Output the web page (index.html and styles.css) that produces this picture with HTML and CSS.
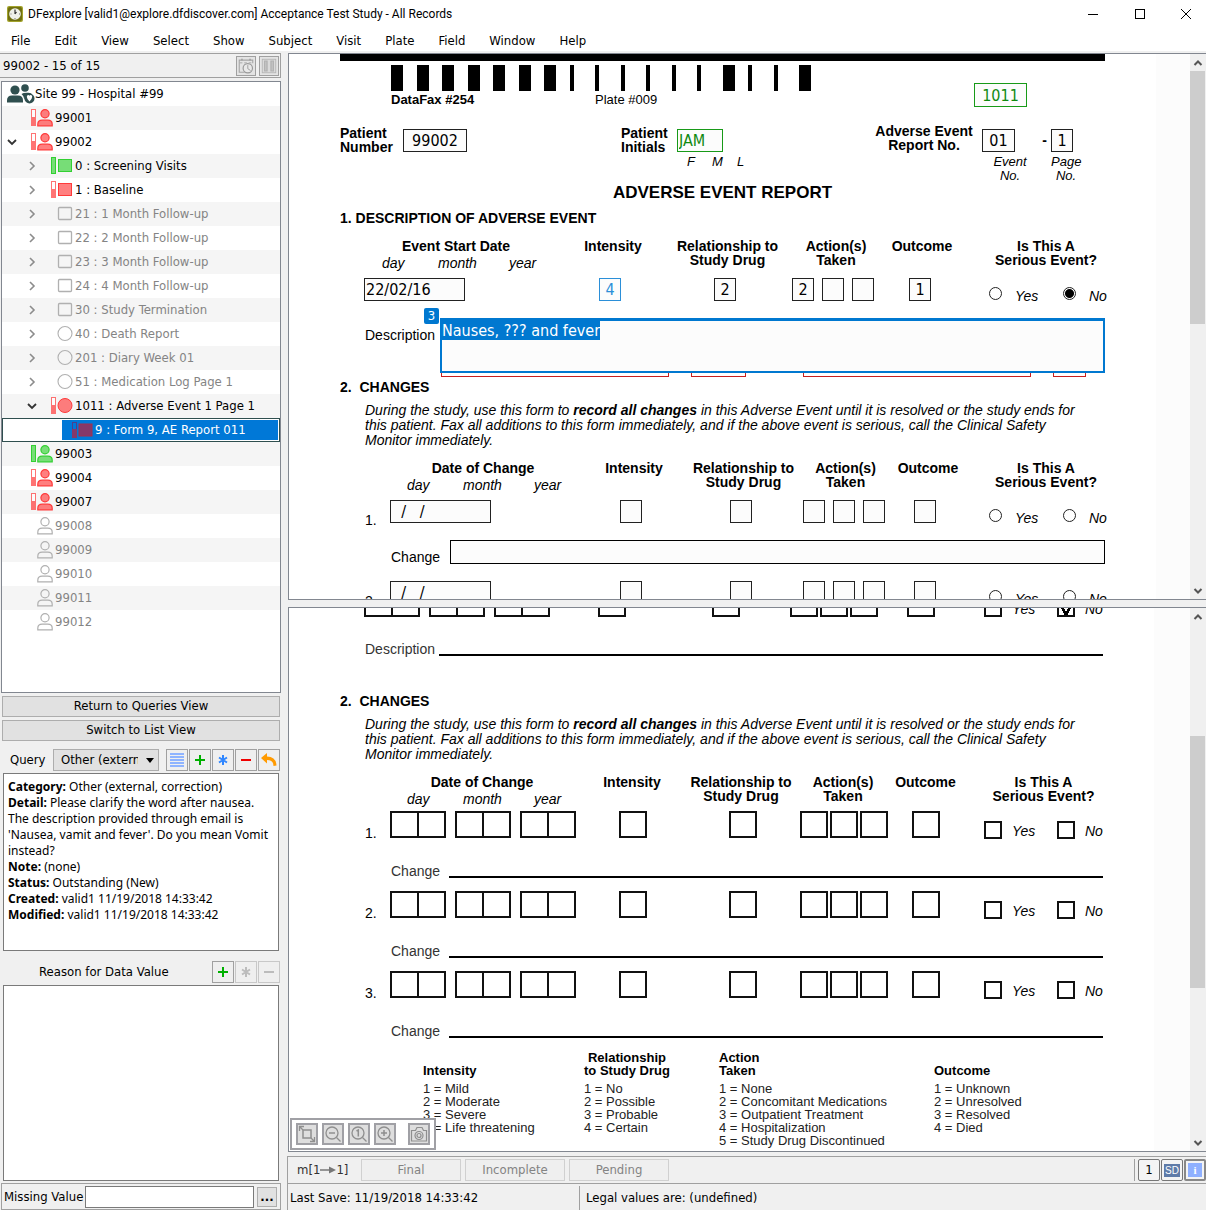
FILE: index.html
```html
<!DOCTYPE html>
<html lang="en">
<head>
<meta charset="utf-8">
<title>DFexplore</title>
<link rel="stylesheet" href="styles.css">
<script src="app.js" defer></script>
</head>
<body>
<svg class="sprite" aria-hidden="true">
  <symbol id="tube-half" viewBox="0 0 22 18"><g opacity=".7"><rect x=".5" y=".5" width="4" height="16" fill="#fff" stroke="currentColor"/><rect x="1" y="8" width="3" height="8" fill="currentColor"/></g></symbol>
  <symbol id="person" viewBox="0 0 22 18"><g fill="currentColor" fill-opacity=".65" stroke="currentColor" stroke-width="1.2"><circle cx="14" cy="4.8" r="4.1"/><path d="M6.8 16.8v-1.6q0-4 4.400-4h5.600q4.400 0 4.400 4v1.600z"/></g></symbol>
  <symbol id="subj-half" viewBox="0 0 22 18"><use href="#tube-half" width="22" height="18"/><use href="#person" width="22" height="18"/></symbol>
  <symbol id="subj-full" viewBox="0 0 22 18"><rect x=".5" y=".5" width="4" height="16" fill="currentColor" fill-opacity=".65" stroke="currentColor"/><use href="#person" width="22" height="18"/></symbol>
  <symbol id="subj-none" viewBox="0 0 22 18"><g fill="none" stroke="currentColor" stroke-width="1.2"><circle cx="14" cy="4.8" r="4.1"/><path d="M6.8 16.8v-1.6q0-4 4.400-4h5.600q4.400 0 4.400 4v1.600z"/></g></symbol>
  <symbol id="visit-full" viewBox="0 0 22 18"><g fill="currentColor" fill-opacity=".65" stroke="currentColor"><rect x=".5" y=".5" width="4" height="16"/><rect x="7.5" y="2.5" width="13" height="12"/></g></symbol>
  <symbol id="visit-half" viewBox="0 0 22 18"><use href="#tube-half" width="22" height="18"/><rect x="7.5" y="2.5" width="13" height="12" fill="currentColor" fill-opacity=".65" stroke="currentColor"/></symbol>
  <symbol id="visit-none" viewBox="0 0 22 18"><rect x="7.5" y="2.5" width="13" height="12" rx="1" fill="none" stroke="currentColor" stroke-width="1.3"/></symbol>
  <symbol id="log-half" viewBox="0 0 22 18"><use href="#tube-half" width="22" height="18"/><circle cx="14" cy="8.5" r="7" fill="currentColor" fill-opacity=".65" stroke="currentColor"/></symbol>
  <symbol id="log-none" viewBox="0 0 22 18"><circle cx="14" cy="8.5" r="7" fill="none" stroke="currentColor" stroke-width="1.1"/></symbol>
  <symbol id="closed" viewBox="0 0 10 10"><path d="M3 1l4 4-4 4" fill="none" stroke="#8c8c8c" stroke-width="1.6"/></symbol>
  <symbol id="open" viewBox="0 0 10 10"><path d="M1 3l4 4 4-4" fill="none" stroke="#333" stroke-width="1.8"/></symbol>
  <symbol id="up" viewBox="0 0 10 10"><path d="M1.5 7L5 3.5 8.500 7" fill="none" stroke="#555" stroke-width="2"/></symbol>
  <symbol id="down" viewBox="0 0 10 10"><path d="M1.500 3L5 6.500 8.500 3" fill="none" stroke="#555" stroke-width="2"/></symbol>
  <symbol id="plus" viewBox="0 0 12 12"><path d="M1 6h10M6 1v10" stroke="currentColor" stroke-width="2"/></symbol>
  <symbol id="minus" viewBox="0 0 12 12"><path d="M1 6h10" stroke="currentColor" stroke-width="2"/></symbol>
  <symbol id="star" viewBox="0 0 12 12"><path d="M6 1v10M2 3.500l8 5M10 3.500l-8 5" stroke="currentColor" stroke-width="2"/></symbol>
  <symbol id="lens" viewBox="0 0 18 18"><circle cx="8" cy="8" r="6" fill="none" stroke="#8f8f8f" stroke-width="1.3"/><path d="M12.500 12.500L16.500 16.500" stroke="#8f8f8f" stroke-width="1.3"/></symbol>
</svg>

<header class="titlebar">
  <svg class="app-icon" viewBox="0 0 16 16"><rect width="16" height="16" rx="2" fill="#a3a32c"/><rect x="1" y="1" width="14" height="14" rx="2" fill="#6f6f10"/><circle cx="8" cy="8" r="5.800" fill="#eef0ea"/><path d="M8 8V3.500M8 8l1.500-2" stroke="#333" stroke-width="1.200"/><path d="M8 12v1M3.500 8h1M12 8h1" stroke="#777"/></svg>
  <h1 class="app-title">DFexplore [valid1@explore.dfdiscover.com] Acceptance Test Study - All Records</h1>
  <div class="window-controls">
    <button aria-label="Minimize"><svg viewBox="0 0 12 12"><path d="M1 6.500h10" stroke="#000"/></svg></button>
    <button aria-label="Maximize"><svg viewBox="0 0 12 12"><rect x="1.500" y="1.500" width="9" height="9" fill="none" stroke="#000"/></svg></button>
    <button aria-label="Close"><svg viewBox="0 0 12 12"><path d="M1 1l10 10M11 1L1 11" stroke="#000"/></svg></button>
  </div>
</header>
<nav class="menubar">
  <button>File</button><button>Edit</button><button>View</button><button>Select</button><button>Show</button><button>Subject</button><button>Visit</button><button>Plate</button><button>Field</button><button>Window</button><button>Help</button>
</nav>

<main class="workspace">
  <aside class="sidebar">
    <div class="record-status">
      <span class="grow">99002 - 15 of 15</span>
      <button class="gray-tool" aria-label="Schedule"><svg viewBox="0 0 20 20" fill="none" stroke="#a5a5a5"><path d="M2.500 9V3.500h15V7M2.500 9v8h6" stroke-width="1.200"/><path d="M3 6.500h14" stroke-dasharray="3 2"/><path d="M5.500 2v2M14.500 2v2" stroke-width="2"/><circle cx="12" cy="12.500" r="5.200" stroke="#999" stroke-width="1.300" fill="#e9e9e9"/><path d="M12 9v4l3 2" stroke="#999"/></svg></button>
      <button class="gray-tool" aria-label="Pause"><svg viewBox="0 0 20 20"><rect x="2.500" y="2.500" width="15" height="15" fill="#dadada" stroke="#b5b5b5"/><path d="M6.500 4v12M13.500 4v12" stroke="#b0b0b0" stroke-width="4"/><path d="M6.500 5v10M13.500 5v10" stroke="#cfcfcf" stroke-width="1"/></svg></button>
    </div>

    <ul class="tree">
      <li class="row site"><svg class="site-icon" viewBox="0 0 28 20" fill="#2f4f4f"><circle cx="8" cy="6" r="4.600"/><path d="M0 18.500v-2q0-5 5-5h6q5 0 5 5v2z"/><circle cx="18" cy="4" r="3.800"/><path d="M14.500 10q2-1.500 7-1.200 3 .2 3.500 2-3.500-1.500-6 1-1.500 1.500-1.500 4-.5-4-3-5.800z"/><circle cx="22.500" cy="14.500" r="5"/><path d="M19.800 12.800q0-1.800 1.500-1.800.8 0 1.200.8.400-.8 1.200-.8 1.500 0 1.500 1.800 0 2-2.700 4.700-2.700-2.700-2.700-4.700z" fill="#fff"/></svg>Site 99 - Hospital #99</li>
      <li class="row"><span class="twig"></span><svg class="state red"><use href="#subj-half"/></svg>99001</li>
      <li class="row"><svg class="twig"><use href="#open"/></svg><svg class="state red"><use href="#subj-half"/></svg>99002</li>
      <li class="row visit"><svg class="twig"><use href="#closed"/></svg><svg class="state green"><use href="#visit-full"/></svg>0 : Screening Visits</li>
      <li class="row visit"><svg class="twig"><use href="#closed"/></svg><svg class="state red"><use href="#visit-half"/></svg>1 : Baseline</li>
      <li class="row visit idle"><svg class="twig"><use href="#closed"/></svg><svg class="state"><use href="#visit-none"/></svg>21 : 1 Month Follow-up</li>
      <li class="row visit idle"><svg class="twig"><use href="#closed"/></svg><svg class="state"><use href="#visit-none"/></svg>22 : 2 Month Follow-up</li>
      <li class="row visit idle"><svg class="twig"><use href="#closed"/></svg><svg class="state"><use href="#visit-none"/></svg>23 : 3 Month Follow-up</li>
      <li class="row visit idle"><svg class="twig"><use href="#closed"/></svg><svg class="state"><use href="#visit-none"/></svg>24 : 4 Month Follow-up</li>
      <li class="row visit idle"><svg class="twig"><use href="#closed"/></svg><svg class="state"><use href="#visit-none"/></svg>30 : Study Termination</li>
      <li class="row visit idle"><svg class="twig"><use href="#closed"/></svg><svg class="state"><use href="#log-none"/></svg>40 : Death Report</li>
      <li class="row visit idle"><svg class="twig"><use href="#closed"/></svg><svg class="state"><use href="#log-none"/></svg>201 : Diary Week 01</li>
      <li class="row visit idle"><svg class="twig"><use href="#closed"/></svg><svg class="state"><use href="#log-none"/></svg>51 : Medication Log Page 1</li>
      <li class="row visit"><svg class="twig"><use href="#open"/></svg><svg class="state red"><use href="#log-half"/></svg>1011 : Adverse Event 1 Page 1</li>
      <li class="row selected"><span class="selection"><svg class="state"><rect x="1.500" y="1.500" width="4" height="15" fill="none" stroke="#4b3f8c"/><rect x="1" y="8" width="5" height="9" fill="#84396a"/><rect x="8" y="3" width="13" height="12" fill="#84396a" stroke="#a03050"/></svg>9 : Form 9, AE Report 011</span></li>
      <li class="row"><span class="twig"></span><svg class="state green"><use href="#subj-full"/></svg>99003</li>
      <li class="row"><span class="twig"></span><svg class="state red"><use href="#subj-half"/></svg>99004</li>
      <li class="row"><span class="twig"></span><svg class="state red"><use href="#subj-half"/></svg>99007</li>
      <li class="row idle"><span class="twig"></span><svg class="state"><use href="#subj-none"/></svg>99008</li>
      <li class="row idle"><span class="twig"></span><svg class="state"><use href="#subj-none"/></svg>99009</li>
      <li class="row idle"><span class="twig"></span><svg class="state"><use href="#subj-none"/></svg>99010</li>
      <li class="row idle"><span class="twig"></span><svg class="state"><use href="#subj-none"/></svg>99011</li>
      <li class="row idle"><span class="twig"></span><svg class="state"><use href="#subj-none"/></svg>99012</li>
    </ul>

    <div class="view-buttons">
      <button class="push">Return to Queries View</button>
      <button class="push">Switch to List View</button>
    </div>

    <div class="tool-row">
      <label class="query-label" for="query">Query</label>
      <span class="combo">
        <select id="query"><option>Other (external, correction)</option></select>
        <svg viewBox="0 0 8 5"><path d="M0 0h8L4 5z"/></svg>
      </span>
      <span class="tools">
        <button aria-label="List queries"><svg viewBox="0 0 14 14"><path d="M0 1h14M0 4h14M0 7h14M0 10h14M0 13h14" stroke="#8fb4ff" stroke-width="2"/></svg></button>
        <button class="add" aria-label="Add query"><svg><use href="#plus"/></svg></button>
        <button class="edit" aria-label="Edit query"><svg><use href="#star"/></svg></button>
        <button class="remove" aria-label="Delete query"><svg><use href="#minus"/></svg></button>
        <button aria-label="Reply"><svg class="reply" viewBox="0 0 16 14"><path d="M0 5l6-5v3.500q9 0 9.500 9L12.500 13q0-6-6.500-6v3.500z" fill="#ff9a00"/></svg></button>
      </span>
    </div>
    <div class="query-text">
      <b>Category:</b> Other (external, correction)<br>
      <b>Detail:</b> Please clarify the word after nausea. The description provided through email is 'Nausea, vamit and fever'. Do you mean Vomit instead?<br>
      <b>Note:</b> (none)<br>
      <b>Status:</b> Outstanding (New)<br>
      <b>Created:</b> valid1 11/19/2018 14:33:42<br>
      <b>Modified:</b> valid1 11/19/2018 14:33:42
    </div>

    <div class="tool-row reason-row">
      <label class="reason-label" for="reason">Reason for Data Value</label>
      <span class="tools">
        <button class="add" aria-label="Add reason"><svg><use href="#plus"/></svg></button>
        <button disabled aria-label="Edit reason"><svg><use href="#star"/></svg></button>
        <button disabled aria-label="Delete reason"><svg><use href="#minus"/></svg></button>
      </span>
    </div>
    <textarea class="reason-text" id="reason" readonly></textarea>

    <div class="missing">
      <label for="missing">Missing Value</label>
      <input id="missing" type="text">
      <button aria-label="Choose missing value">...</button>
    </div>
  </aside>

  <section class="content">
    <div class="pane pane-entry">
      <div class="paper">
        <div class="top-rule"></div>
        <div class="form-id">
          <div>
            <svg class="barcode" viewBox="0 0 420 26"><path d="M0 0h12v26H0zM26 0h12v26H26zM51 0h12v26H51zM77 0h12v26H77zM102 0h12v26h-12zM128 0h12v26h-12zM153 0h12v26h-12zM179 0h4v26h-4zM204 0h4v26h-4zM230 0h4v26h-4zM255 0h4v26h-4zM281 0h4v26h-4zM306 0h4v26h-4zM332 0h12v26h-12zM357 0h4v26h-4zM383 0h4v26h-4zM408 0h12v26h-12z"/></svg>
            <div class="form-names"><b>DataFax #254</b><span>Plate #009</span></div>
          </div>
          <input class="field visit-no" aria-label="Visit number" value="1011">
        </div>

        <div class="identity">
          <label class="id-label" for="pid">Patient<br>Number</label>
          <div class="id-field"><input class="field w-pid" id="pid" value="99002"></div>
          <label class="id-label" for="initials">Patient<br>Initials</label>
          <div class="id-field"><input class="field w-initials" id="initials" value="JAM">
            <div class="note fml"><span>F</span><span>M</span><span>L</span></div></div>
          <label class="ae-label" for="event">Adverse Event<br>Report No.</label>
          <div class="id-field"><div class="event-no"><input class="field w-event" id="event" value="01"><b>-</b></div>
            <div class="note note-event">Event<br>No.</div></div>
          <div class="id-field"><input class="field box" aria-label="Page number" value="1">
            <div class="note note-page">Page<br>No.</div></div>
        </div>

        <h2 class="form-title">ADVERSE EVENT REPORT</h2>
        <h3 class="section-one">1. DESCRIPTION OF ADVERSE EVENT</h3>
        <div class="heads heads-event">
          <div>Event Start Date<div class="dmy dmy-event"><span>day</span><span>month</span><span>year</span></div></div>
          <div>Intensity</div><div>Relationship to<br>Study Drug</div><div>Action(s)<br>Taken</div><div>Outcome</div>
          <div class="serious-head">Is This A<br>Serious Event?</div>
        </div>
        <div class="entry entry-event">
          <div><input class="field date" aria-label="Event start date" value="22/02/16"></div>
          <div><input class="field box queried" aria-label="Intensity" value="4"></div>
          <div><input class="field box" aria-label="Relationship to study drug" value="2"></div>
          <div class="actions"><input class="field box" aria-label="Action 1" value="2"><input class="field box" aria-label="Action 2"><input class="field box" aria-label="Action 3"></div>
          <div><input class="field box" aria-label="Outcome" value="1"></div>
          <div class="serious"><label><input type="radio" name="s0"><i>Yes</i></label><label><input type="radio" name="s0" checked><i>No</i></label></div>
        </div>

        <div class="description">
          <label for="description">Description</label>
          <div class="description-box">
            <textarea id="description">Nauses, ??? and fever</textarea>
            <span class="badge">3</span>
          </div>
        </div>
        <div class="queried-under"><span class="long"></span><span class="mid"></span><span class="long second"></span><span class="short"></span></div>

        <h3 class="section-two">2.&nbsp; CHANGES</h3>
        <p class="instructions">During the study, use this form to <b>record all changes</b> in this Adverse Event until it is resolved or the study ends for this patient. Fax all additions to this form immediately, and if the above event is serious, call the Clinical Safety Monitor immediately.</p>
        <div class="heads heads-change">
          <div>Date of Change<div class="dmy"><span>day</span><span>month</span><span>year</span></div></div>
          <div>Intensity</div><div>Relationship to<br>Study Drug</div><div>Action(s)<br>Taken</div><div>Outcome</div>
          <div class="serious-head">Is This A<br>Serious Event?</div>
        </div>
        <div class="entry entry-change">
          <span class="num">1.</span>
          <div><input class="field date" aria-label="Date of change 1" value="  /   /"></div>
          <div><input class="field box" aria-label="Intensity 1"></div>
          <div><input class="field box" aria-label="Relationship 1"></div>
          <div class="actions"><input class="field box" aria-label="Action 1"><input class="field box" aria-label="Action 2"><input class="field box" aria-label="Action 3"></div>
          <div><input class="field box" aria-label="Outcome 1"></div>
          <div class="serious"><label><input type="radio" name="s1"><i>Yes</i></label><label><input type="radio" name="s1"><i>No</i></label></div>
        </div>
        <div class="change"><label for="change1">Change</label><input class="field" id="change1"></div>
        <div class="entry entry-change second-change">
          <span class="num">2.</span>
          <div><input class="field date" aria-label="Date of change 2" value="  /   /"></div>
          <div><input class="field box" aria-label="Intensity 2"></div>
          <div><input class="field box" aria-label="Relationship 2"></div>
          <div class="actions"><input class="field box" aria-label="Action 1"><input class="field box" aria-label="Action 2"><input class="field box" aria-label="Action 3"></div>
          <div><input class="field box" aria-label="Outcome 2"></div>
          <div class="serious"><label><input type="radio" name="s2"><i>Yes</i></label><label><input type="radio" name="s2"><i>No</i></label></div>
        </div>
      </div>
      <div class="scrollbar"><svg><use href="#up"/></svg><div class="track"><span class="before"></span><span class="thumb"></span><span class="after"></span></div><svg><use href="#down"/></svg></div>
    </div>

    <div class="pane pane-scan">
      <div class="paper">
        <div class="scan-row scan-event">
          <div class="pairs"><span class="pair"></span><span class="pair"></span><span class="pair"></span></div>
          <div><span class="cell"></span></div><div><span class="cell"></span></div>
          <div class="cells"><span class="cell"></span><span class="cell"></span><span class="cell"></span></div>
          <div><span class="cell"></span></div>
          <div class="ticks"><label><input type="checkbox"><i>Yes</i></label><label><input type="checkbox" checked><i>No</i></label></div>
        </div>
        <div class="ruled ruled-description"><span>Description</span><hr></div>
        <h3 class="section-scan">2.&nbsp; CHANGES</h3>
        <p class="instructions">During the study, use this form to <b>record all changes</b> in this Adverse Event until it is resolved or the study ends for this patient. Fax all additions to this form immediately, and if the above event is serious, call the Clinical Safety Monitor immediately.</p>
        <div class="heads heads-scan">
          <div>Date of Change<div class="dmy"><span>day</span><span>month</span><span>year</span></div></div>
          <div>Intensity</div><div>Relationship to<br>Study Drug</div><div>Action(s)<br>Taken</div><div>Outcome</div>
          <div class="serious-head">Is This A<br>Serious Event?</div>
        </div>
        <div class="scan-row">
          <span class="num">1.</span>
          <div class="pairs"><span class="pair"></span><span class="pair"></span><span class="pair"></span></div>
          <div><span class="cell"></span></div><div><span class="cell"></span></div>
          <div class="cells"><span class="cell"></span><span class="cell"></span><span class="cell"></span></div>
          <div><span class="cell"></span></div>
          <div class="ticks"><label><input type="checkbox"><i>Yes</i></label><label><input type="checkbox"><i>No</i></label></div>
        </div>
        <div class="ruled"><span>Change</span><hr></div>
        <div class="scan-row">
          <span class="num">2.</span>
          <div class="pairs"><span class="pair"></span><span class="pair"></span><span class="pair"></span></div>
          <div><span class="cell"></span></div><div><span class="cell"></span></div>
          <div class="cells"><span class="cell"></span><span class="cell"></span><span class="cell"></span></div>
          <div><span class="cell"></span></div>
          <div class="ticks"><label><input type="checkbox"><i>Yes</i></label><label><input type="checkbox"><i>No</i></label></div>
        </div>
        <div class="ruled"><span>Change</span><hr></div>
        <div class="scan-row">
          <span class="num">3.</span>
          <div class="pairs"><span class="pair"></span><span class="pair"></span><span class="pair"></span></div>
          <div><span class="cell"></span></div><div><span class="cell"></span></div>
          <div class="cells"><span class="cell"></span><span class="cell"></span><span class="cell"></span></div>
          <div><span class="cell"></span></div>
          <div class="ticks"><label><input type="checkbox"><i>Yes</i></label><label><input type="checkbox"><i>No</i></label></div>
        </div>
        <div class="ruled"><span>Change</span><hr></div>
        <div class="legend">
          <b>Intensity</b><b class="centered">Relationship<br>to Study Drug</b><b>Action<br>Taken</b><b>Outcome</b>
          <div>1 = Mild<br>2 = Moderate<br>3 = Severe<br>4 = Life threatening</div>
          <div>1 = No<br>2 = Possible<br>3 = Probable<br>4 = Certain</div>
          <div>1 = None<br>2 = Concomitant Medications<br>3 = Outpatient Treatment<br>4 = Hospitalization<br>5 = Study Drug Discontinued</div>
          <div>1 = Unknown<br>2 = Unresolved<br>3 = Resolved<br>4 = Died</div>
        </div>
      </div>
      <div class="scrollbar low"><svg><use href="#up"/></svg><div class="track"><span class="before"></span><span class="thumb"></span><span class="after"></span></div><svg><use href="#down"/></svg></div>
      <div class="zoom-tools">
        <button aria-label="Fit"><svg viewBox="0 0 18 18" fill="none" stroke="#8f8f8f"><rect x="5" y="5" width="8" height="8" stroke-width="1.500"/><path d="M1.500 6V1.500H6M1.500 1.500L5 5M12 16.500h4.500V12M13 13l3.500 3.500" stroke-width="1.300"/></svg></button>
        <button aria-label="Zoom out"><svg viewBox="0 0 18 18"><use href="#lens"/><path d="M5 8h6" stroke="#8f8f8f" stroke-width="1.500"/></svg></button>
        <button aria-label="Actual size"><svg viewBox="0 0 18 18"><use href="#lens"/><path d="M6.500 6L8.300 5v6.500" fill="none" stroke="#8f8f8f" stroke-width="1.500"/></svg></button>
        <button aria-label="Zoom in"><svg viewBox="0 0 18 18"><use href="#lens"/><path d="M5 8h6M8 5v6" stroke="#8f8f8f" stroke-width="1.500"/></svg></button>
        <button class="snapshot" aria-label="Snapshot"><svg viewBox="0 0 18 18" fill="none" stroke="#8f8f8f" stroke-width="1.200"><path d="M1.500 5.500h4L7 2.500h5l1.500 3h3v10.500h-15z"/><circle cx="9" cy="10.500" r="4"/><circle cx="9" cy="10.500" r="2"/></svg></button>
      </div>
    </div>

    <footer class="statusbar">
      <div class="mode-row">
        <span class="mode">m[1<svg viewBox="0 0 16 8"><path d="M0 4h11" stroke="#777" stroke-width="1.500"/><path d="M9 .5L16 4 9 7.500z" fill="#777"/></svg>1]</span>
        <button class="level" disabled>Final</button><button class="level" disabled>Incomplete</button><button class="level" disabled>Pending</button>
        <span class="indicators"><button>1</button><button><span class="sd">SD</span></button><button class="on"><span class="info">i</span></button></span>
      </div>
      <div class="message-row"><span class="saved">Last Save: 11/19/2018 14:33:42</span><span class="legal">Legal values are: (undefined)</span></div>
    </footer>
  </section>
</main>
</body>
</html>
```
FILE: styles.css
```css
:root {
  --ui: "DejaVu Sans Condensed", "Noto Sans", "Open Sans", sans-serif;
  --form: "Liberation Sans", Arial, sans-serif;
  --frame: #828790;
  --blue: #0078d0;
}
* { box-sizing: border-box; }
body {
  margin: 0;
  height: 100vh;
  display: flex;
  flex-direction: column;
  background: #f0f0f0;
  color: #000;
  font: 13px/16px var(--ui);
  overflow: hidden;
}
button, input, select, textarea { font: inherit; color: inherit; margin: 0; border-radius: 0; }
button { padding: 0; }
h1, h2, h3, p, ul { margin: 0; padding: 0; }
svg { display: block; flex: none; }
.sprite { position: absolute; width: 0; height: 0; }

/* window frame */
.titlebar { display: flex; align-items: center; height: 27px; flex: none; background: #fff; padding-left: 7px; }
.app-icon { width: 16px; height: 16px; }
.app-title { flex: 1; margin-left: 5px; font: 400 12px/16px Roboto, sans-serif; }
.window-controls { display: flex; gap: 5px; }
.window-controls button { width: 42px; height: 27px; border: 0; background: none; display: grid; place-items: center; }
.window-controls svg { width: 12px; height: 12px; }
.window-controls button:last-child { width: 40px; }
.menubar { display: flex; gap: 24px; align-items: center; height: 24px; flex: none; background: #fff; padding: 3px 0 0 11px; }
.menubar button { border: 0; background: none; }
.workspace { flex: 1; min-height: 0; display: grid; grid-template-columns: 281px 1fr; column-gap: 6px; }

/* side bar */
.sidebar { display: flex; flex-direction: column; min-height: 0; padding-top: 2px; }
.record-status { display: flex; align-items: center; gap: 3px; height: 25px; flex: none; border: 1px solid #a0a0a0; border-left: 0; padding: 0 1px 0 3px; margin-bottom: 3px; }
.grow { flex: 1; }
.gray-tool { width: 20px; height: 20px; border: 1px solid #a0a0a0; background: #e4e4e4; }
.gray-tool svg { width: 18px; height: 18px; }
.tree { list-style: none; flex: 611 1 611px; min-height: 0; overflow: hidden; margin-left: 1px; background: #fff; border: 1px solid var(--frame); }
.row { display: flex; align-items: center; height: 24px; }
.row:nth-child(even) { background: #f5f5f5; }
.twig { width: 10px; height: 10px; margin: 0 14px 0 5px; }
.state { width: 22px; height: 18px; margin-right: 2px; color: #b0b0b0; }
.visit { padding-left: 20px; }
.idle { color: #848484; }
.state.red { color: #ff3a3a; }
.state.green { color: #32d032; }
.site { padding-left: 5px; }
.site-icon { width: 28px; height: 20px; }
.row.selected { background: #fff; border: 1px solid #2f4f4f; padding: 1px 1px 1px 59px; }
.selection { flex: 1; height: 20px; display: flex; align-items: center; background: #0078d7; color: #fff; padding-left: 9px; }

.view-buttons { display: grid; gap: 3px; padding: 3px 1px 0 2px; flex: none; }
.push { height: 21px; border: 1px solid #adadad; background: #e1e1e1; }
.tool-row { display: flex; align-items: center; flex: none; height: 22px; margin: 8px 1px 2px 10px; }
.query-label { width: 43px; }
.combo { position: relative; width: 106px; }
.combo select { width: 106px; height: 22px; appearance: none; border: 1px solid #adadad; background: #e1e1e1; padding: 0 20px 0 7px; }
.combo svg { position: absolute; right: 5px; top: 9px; width: 8px; height: 5px; pointer-events: none; }
.tools { display: flex; gap: 1px; margin-left: auto; }
.tools button { width: 22px; height: 22px; border: 1px solid #a0a0a0; background: #efefef; display: grid; place-items: center; }
.tools svg { width: 12px; height: 12px; }
.tools .reply { width: 16px; height: 14px; }
.tools button:first-child svg { width: 14px; height: 14px; }
.tools .add { color: #00b000; }
.tools .add svg, .tools button.add:first-child svg { width: 12px; height: 12px; }
.tools .edit { color: #2f86ff; }
.tools .remove { color: #f00000; }
.tools button:disabled { border-color: #c8c8c8; color: #bcbcbc; }
.query-text { flex: 178 1 178px; min-height: 0; overflow: hidden; margin: 0 2px 0 3px; padding: 5px 4px; border: 1px solid #7a7a7a; background: #fff; font: 12px/16px "Noto Sans", "Open Sans", sans-serif; }
.reason-row { margin-top: 10px; padding-left: 29px; }
.reason-text { flex: 196 1 196px; min-height: 0; margin: 0 2px 2px 3px; border: 1px solid #7a7a7a; background: #fff; resize: none; }
.missing { display: flex; align-items: center; gap: 2px; height: 27px; flex: none; margin-left: 1px; padding: 0 3px 0 2px; border: 1px solid #a0a0a0; white-space: nowrap; }
.missing input { flex: 1; min-width: 0; height: 22px; border: 1px solid #7a7a7a; background: #fff; }
.missing button { width: 20px; height: 20px; margin-left: 1px; border: 1px solid #adadad; background: #e1e1e1; font-weight: 700; line-height: 12px; }

/* panes */
.content { display: flex; flex-direction: column; min-width: 0; min-height: 0; padding-top: 2px; }
.pane { position: relative; display: flex; flex: 547 1 0; min-height: 0; overflow: hidden; margin-left: 1px; border: 1px solid var(--frame); border-right: 0; background: #fcfcfc; }
.pane-scan { flex-grow: 546; margin-top: 7px; }
.paper { flex: 1; min-width: 0; height: fit-content; min-height: 100%; padding: 0 51px; margin-right: 34px; background: #fff; font: 14px/14px var(--form); }
.pane-scan .paper { margin-right: 36px; }
.scrollbar { display: flex; flex-direction: column; width: 16px; background: #f0f0f0; padding-right: 1px; }
.scrollbar svg { width: 10px; height: 10px; margin: 4px auto 3px; }
.track { flex: 1; display: flex; flex-direction: column; }
.thumb { background: #cdcdcd; flex: 253; }
.before { flex: 0; }
.after { flex: 258; }
.low .before { flex: 112; }
.low .after { flex: 147; }

/* form headings */
h2, h3 { font-size: 14px; font-weight: 700; }
.top-rule { height: 7px; background: #000; }
.form-id { display: flex; align-items: flex-end; gap: 163px; padding: 4px 0 0 51px; }
.barcode { width: 420px; height: 26px; margin-bottom: 2px; }
.form-names { display: flex; font-size: 13px; }
.form-names b { width: 204px; }
.field { display: block; height: 23px; padding: 0; border: 1px solid #222; background: #fcfcfc; font: 16px/21px var(--ui); text-align: center; outline: 0; }
.visit-no { width: 53px; height: 24px; border-color: #189a18; color: #108a10; }
.identity { display: grid; grid-template-columns: 63px 218px 56px 198px 107px 69px 1fr; margin-top: 17px; font-weight: 700; }
.id-label { padding-top: 2px; }
.ae-label { text-align: center; width: 98px; }
.id-field { padding-top: 5px; }
.w-pid { width: 64px; }
.w-initials { width: 46px; padding-left: 1px; text-align: left; border-color: #189a18; color: #108a10; }
.w-event { width: 33px; }
.box { width: 22px; }
.event-no { display: flex; justify-content: space-between; padding-right: 4px; }
.event-no b { padding-top: 4px; }
.note { margin-top: 3px; font-size: 13px; font-style: italic; font-weight: 400; text-align: center; }
.fml { display: flex; padding-left: 10px; text-align: left; }
.fml span { width: 25px; }
.note-event { width: 56px; }
.note-page { width: 30px; }
.form-title { font-size: 17px; line-height: 20px; text-align: center; }
.section-one { margin-top: 8px; }
.section-two { margin-top: 3px; }
.instructions { margin-top: 9px; padding: 0 15px 0 25px; line-height: 15px; font-style: italic; }

.heads { display: grid; margin-top: 13px; font-weight: 700; text-align: center; }
.heads-event { grid-template-columns: 192px 122px 107px 110px 62px 1fr; margin-top: 14px; padding-left: 20px; }
.heads-change { grid-template-columns: 186px 116px 103px 101px 64px 1fr; padding-left: 50px; }
.heads-scan { grid-template-columns: 184px 116px 102px 102px 63px 1fr; padding-left: 50px; }
.serious-head { padding-left: 27px; }
.heads-event .serious-head { padding-left: 34px; }
.dmy { display: flex; margin-top: 3px; padding-left: 17px; font-weight: 400; font-style: italic; text-align: left; }
.dmy-event { padding-left: 22px; }
.dmy span:nth-child(1) { width: 56px; }
.dmy span:nth-child(2) { width: 71px; }

/* data entry rows */
.entry { display: grid; margin-top: 8px; }
.entry-event { grid-template-columns: 235px 115px 78px 117px 79px 1fr; padding-left: 24px; }
.entry-change { grid-template-columns: 25px 230px 110px 73px 111px 74px 1fr; padding-left: 25px; }
.date { width: 101px; padding-left: 1px; text-align: left; }
.queried { border-color: #2b8fd8; color: #2b8fd8; }
.actions { display: flex; gap: 8px; }
.num { padding-top: 13px; }
.serious { display: flex; padding: 9px 0 0 1px; }
.serious label { display: flex; align-items: flex-start; gap: 13px; width: 74px; }
.serious label + label { width: 44px; }
.serious i { padding-top: 2px; }
.serious input { appearance: none; flex: none; width: 13px; height: 13px; border: 1px solid #222; border-radius: 50%; background: #fff; }
.serious input:checked { background: radial-gradient(circle, #000 4px, #fff 5px); }
.description { display: flex; margin-top: 15px; padding-left: 25px; }
.description label { width: 75px; padding-top: 10px; }
.description-box { position: relative; flex: 1; }
.description textarea { display: block; width: 100%; height: 55px; padding: 0; resize: none; outline: 0; overflow: hidden; border: 2px solid var(--blue); border-top-width: 3px; background: #fcfcfc; font: 16px/19px var(--ui); }
.description textarea::selection { background: var(--blue); color: #fff; }
.badge { position: absolute; left: -16px; top: -10px; width: 15px; height: 16px; border-radius: 2px; background: var(--blue); color: #fff; font: 13px/16px var(--ui); text-align: center; }
.queried-under { display: flex; gap: 22px; height: 4px; padding-left: 101px; }
.queried-under span { border: 1px solid #c81e1e; border-top: 0; }
.long { width: 228px; }
.mid { width: 55px; }
.second { margin-left: 35px; }
.short { width: 33px; }
.change { display: flex; margin-top: 13px; padding-left: 51px; }
.change label { width: 59px; padding-top: 10px; }
.change .field { flex: 1; min-width: 0; height: 24px; border-color: #000; }
.second-change { margin-top: 17px; }

/* scanned page */
.scan-row { display: grid; grid-template-columns: 25px 229px 110px 71px 112px 72px 1fr; padding-left: 25px; height: 29px; margin-top: 13px; }
.heads-scan + .scan-row { margin-top: 5px; }
.scan-row .num { padding-top: 15px; }
.pane-scan .scan-event { grid-template: 9px / 234px 114px 78px 117px 77px 1fr; padding-left: 24px; height: 9px; margin: 0; overflow: hidden; align-items: end; }
.pairs { display: flex; gap: 9px; }
.pair { width: 56px; height: 27px; border: 2px solid #111; background: linear-gradient(#111, #111) center / 2px 100% no-repeat; }
.cells { display: flex; gap: 2px; }
.cell { display: block; width: 28px; height: 27px; border: 2px solid #111; }
.ticks { display: flex; padding-top: 10px; }
.ticks label { display: flex; align-items: center; gap: 10px; width: 73px; height: 18px; }
.ticks label + label { width: 46px; }
.ticks i { padding-top: 2px; }
.ticks input { appearance: none; flex: none; width: 18px; height: 18px; border: 2px solid #111; }
.ticks input:checked {
  background:
    linear-gradient(to top right, transparent 38%, #000 40% 60%, transparent 62%) left / 50% 100% no-repeat,
    linear-gradient(to bottom right, transparent 38%, #000 40% 60%, transparent 62%) right / 50% 100% no-repeat;
}
.ruled { display: flex; align-items: flex-end; margin-top: 24px; padding-left: 51px; }
.ruled span { width: 58px; color: #333; }
.ruled hr { flex: 1; height: 2px; margin: 0; border: 0; background: #000; }
.ruled-description { padding-left: 25px; margin-top: 25px; }
.ruled-description span { width: 74px; }
.section-scan { margin-top: 38px; }
.legend { display: grid; grid-template-columns: 161px 135px 215px 1fr; row-gap: 5px; margin-top: 13px; padding-left: 83px; font-size: 13px; line-height: 13px; color: #222; }
.legend b { align-self: end; color: #000; }
.centered { text-align: center; justify-self: start; }
.zoom-tools { position: absolute; left: 1px; bottom: 1px; display: flex; gap: 4px; padding: 3px 4px; border: 2px solid #a0a0a5; background: #fff; }
.zoom-tools button { width: 22px; height: 22px; border: 2px solid #a0a0a5; background: #dedede; }
.zoom-tools svg { width: 18px; height: 18px; }
.zoom-tools .snapshot { margin-left: 8px; }

/* status bar */
.statusbar { flex: none; margin-top: 4px; border: 1px solid #a0a0a0; border-width: 1px 0 0 1px; }
.mode-row { display: flex; align-items: center; gap: 4px; height: 27px; padding-left: 9px; border-bottom: 1px solid #a0a0a0; }
.mode { display: flex; align-items: center; width: 60px; color: #333; }
.mode svg { width: 16px; height: 8px; }
.level { width: 100px; height: 22px; border: 1px solid #d0d0d0; background: #efefef; color: #838383; }
.indicators { display: flex; gap: 1px; margin-left: auto; padding-left: 3px; border-left: 1px solid #a0a0a0; }
.indicators button { width: 22px; height: 22px; border: 1px solid #777; border-radius: 2px; background: #f4f4f4; display: grid; place-items: center; }
.indicators .on { border: 2px solid #888; }
.sd { width: 16px; background: #5f7ba8; color: #fff; font: 10px/13px var(--form); }
.info { width: 14px; background: #8fb0ff; color: #fff; font: bold 11px/14px "Liberation Serif", serif; }
.message-row { display: flex; height: 26px; padding: 2px 0 0 2px; line-height: 24px; }
.saved { width: 290px; border-right: 1px solid #a0a0a0; }
.legal { padding-left: 6px; }
```
FILE: app.js
```js
// Open the record with the queried field active and its text selected.
const active = document.getElementById('description');
active.focus();
active.select();
```
